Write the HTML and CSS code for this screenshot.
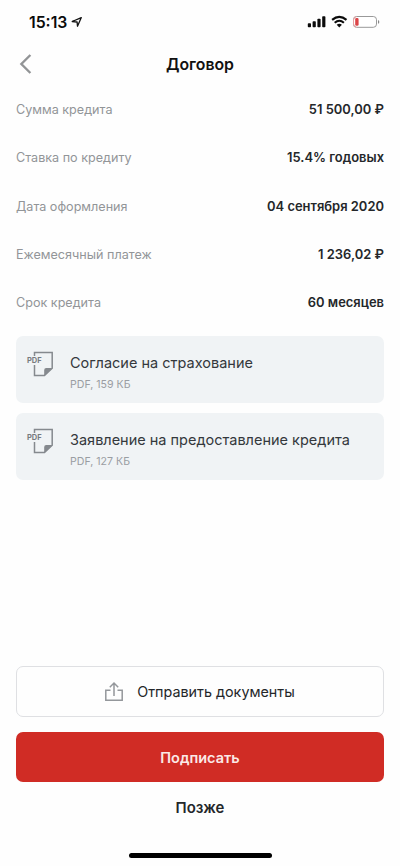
FILE: index.html
```html
<!DOCTYPE html>
<html lang="ru">
<head>
<meta charset="utf-8">
<title>Договор</title>
<link rel="stylesheet" href="styles.css">
</head>
<body>
<div class="screen">
  <div class="status">
    <span class="time">15:13</span>
    <svg class="location" width="12" height="12" viewBox="0 0 12 12"><path d="M1.2 5.5 10.3 1.6 6.5 10.2 6.1 6Z" fill="none" stroke="#111" stroke-width="1.3" stroke-linejoin="round"/></svg>
    <svg class="indicators" width="74" height="14" viewBox="0 0 74 14">
      <g fill="#0b0b0b"><rect x="1.8" y="8.3" width="3.2" height="4" rx=".8"/><rect x="6.6" y="6.2" width="3.2" height="6.1" rx=".8"/><rect x="11.4" y="3.7" width="3.2" height="8.6" rx=".8"/><rect x="16.2" y="1.2" width="3.2" height="11.1" rx=".8"/></g>
      <g transform="translate(1 0)"><g fill="none" stroke="#0b0b0b" stroke-width="2.1"><path d="M25.1 4.9Q32.3-1.3 39.5 4.9"/><path d="M27.7 7.8Q32.3 3.7 36.9 7.8"/></g>
      <path d="M29.7 9.8Q32.3 7.8 34.9 9.8L32.3 12.4Z" fill="#0b0b0b"/></g>
      <g transform="translate(1 0)"><rect x="46.5" y="1.5" width="23" height="10.8" rx="3.2" fill="#fff" stroke="#999" stroke-width="1"/>
      <path d="M49.3 1.5Q46.5 1.7 46.5 5V9Q46.5 12.2 49.3 12.3" fill="none" stroke="#e8a0a0"/>
      <rect x="48.2" y="3.1" width="3.4" height="7.6" rx="1.3" fill="#dc4548"/>
      <path d="M71 5.1Q72.3 5.5 72.3 6.9T71 8.7Z" fill="#888"/></g>
    </svg>
  </div>
  <header class="nav">
    <svg class="back" width="14" height="22" viewBox="0 0 14 22"><path d="M12.4 2 3.4 11 12.4 20" fill="none" stroke="#929496" stroke-width="2.4"/></svg>
    <h1>Договор</h1>
  </header>
  <dl class="details">
    <div class="row"><dt>Сумма кредита</dt><dd>51 500,00 ₽</dd></div>
    <div class="row"><dt>Ставка по кредиту</dt><dd>15.4% годовых</dd></div>
    <div class="row"><dt>Дата оформления</dt><dd>04 сентября 2020</dd></div>
    <div class="row"><dt>Ежемесячный платеж</dt><dd>1 236,02 ₽</dd></div>
    <div class="row"><dt>Срок кредита</dt><dd>60 месяцев</dd></div>
  </dl>
  <div class="files">
    <div class="file">
      <div class="pdf"><svg width="28" height="26" viewBox="0 0 28 26"><path d="M7.5 5V1.5H25.2V17.2L17.5 24.5H7.5V14" fill="none" stroke="#85898e" stroke-width="1.5"/><path d="M17.2 24.8V19Q17.2 17 19.2 17H25.5Z" fill="#85898e"/></svg><span>PDF</span></div>
      <div><div class="name">Согласие на страхование</div><div class="meta">PDF, 159 КБ</div></div>
    </div>
    <div class="file">
      <div class="pdf"><svg width="28" height="26" viewBox="0 0 28 26"><path d="M7.5 5V1.5H25.2V17.2L17.5 24.5H7.5V14" fill="none" stroke="#85898e" stroke-width="1.5"/><path d="M17.2 24.8V19Q17.2 17 19.2 17H25.5Z" fill="#85898e"/></svg><span>PDF</span></div>
      <div><div class="name">Заявление на предоставление кредита</div><div class="meta">PDF, 127 КБ</div></div>
    </div>
  </div>
  <div class="actions">
    <button class="send"><svg width="20" height="22" viewBox="0 0 20 22"><path d="M6.5 10.2H1.8V20.2H18.2V10.2H13.5M10 16V3M5.8 7.2 10 3 14.2 7.2" fill="none" stroke="#94979b" stroke-width="1.5"/></svg><span>Отправить документы</span></button>
    <button class="sign">Подписать</button>
    <button class="later">Позже</button>
  </div>
  <div class="home"></div>
</div>
</body>
</html>
```
FILE: styles.css
```css
* { box-sizing: border-box; margin: 0; padding: 0; }
body { background: #fefefe; font-family: Inter, "Liberation Sans", sans-serif; color: #24272a; }
.screen { width: 400px; height: 866px; display: flex; flex-direction: column; background: #fefefe; overflow: hidden; }
.status { height: 44px; padding: 15px 20px 0 29px; display: flex; align-items: flex-start; }
.time { font-size: 15.8px; line-height: 15px; font-weight: 600; color: #0b0b0b; }
.location { margin: 1px 0 0 4px; }
.indicators { margin-left: auto; }
.nav { height: 41px; padding: 0 16px 2px; display: grid; grid-template-columns: 20px 1fr 20px; align-items: center; }
.back { margin-left: 2px; }
.nav h1 { padding-top: 2px; font-size: 15.8px; line-height: 20px; font-weight: 600; text-align: center; color: #111; }
.details { padding: 0 16px; }
.row { height: 48.3px; display: flex; align-items: center; justify-content: space-between; font-size: 12.95px; line-height: 18px; }
dt { padding-top: 2px; color: #929598; font-size: 12.6px; }
dd { font-weight: 600; }
.files { margin-top: 10px; padding: 0 16px; display: flex; flex-direction: column; gap: 10px; }
.file { height: 67px; border-radius: 7px; background: #f0f3f5; display: flex; padding: 17px 11px 0; gap: 16px; }
.pdf { position: relative; width: 27px; flex: none; }
.pdf svg { display: block; margin-top: -2px; }
.pdf span { position: absolute; left: 0; top: 3px; font-size: 7.5px; line-height: 9px; font-weight: 700; color: #777b80; background: #f0f3f5; }
.name { font-size: 14.5px; line-height: 20px; color: #34383c; white-space: nowrap; }
.meta { font-size: 10.6px; line-height: 14px; margin-top: 5px; color: #9a9da2; }
.actions { margin-top: auto; padding: 0 16px; display: flex; flex-direction: column; }
button { font-family: inherit; border: 0; background: none; color: #24272a; display: flex; align-items: center; justify-content: center; }
.send { height: 51px; padding: 0 1px 1px 0; border: 1px solid #dfe0e3; border-radius: 7px; gap: 13px; font-size: 14.35px; }
.sign { height: 50px; margin-top: 15px; border-radius: 7px; background: #d02c25; color: #fbe9e7; font-weight: 600; font-size: 14.5px; }
.later { height: 50px; padding-top: 2px; font-weight: 600; font-size: 14.9px; }
.home { width: 143px; height: 5px; border-radius: 3px; background: #000; margin: 21px auto 8px; }
```
